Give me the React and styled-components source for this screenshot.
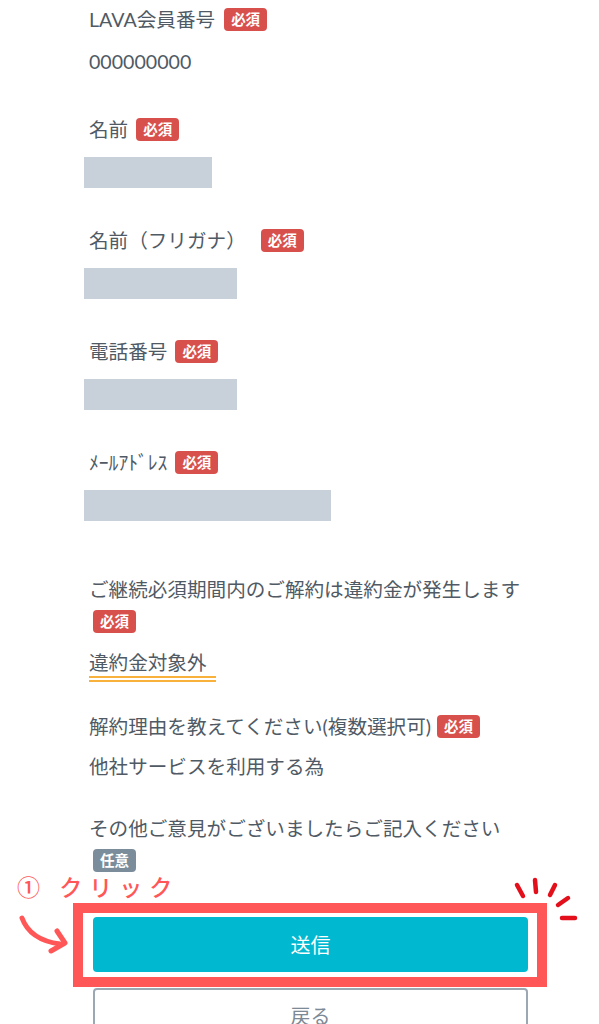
import React from 'react';
import styled, { createGlobalStyle } from 'styled-components';

const GlobalStyle = createGlobalStyle`
  body {
    margin: 0;
    background: #fff;
    font-family: Lato, "Noto Sans CJK JP", sans-serif;
  }
`;

const Page = styled.div`
  width: 599px;
  height: 1024px;
  overflow: hidden;
  box-sizing: border-box;
  padding-top: 5px;
  color: #4f5a65;
`;

const Form = styled.div`
  padding: 0 71px 0 89px;
  display: flex;
  flex-direction: column;
`;

const Field = styled.div`
  margin-top: ${p => p.$mt || 0}px;
`;

const Label = styled.div`
  font-size: 19.6px;
  line-height: ${p => p.$lh || 30}px;
`;

const Badge = styled.span`
  display: inline-block;
  margin-left: ${p => p.$ml || 4}px;
  padding: 2px 7px;
  font-size: 14.5px;
  line-height: 19px;
  font-weight: 700;
  color: #fff;
  background: ${p => (p.$optional ? '#7b8d9a' : '#d8504c')};
  border-radius: 4px;
  vertical-align: 2px;
`;

const Value = styled.div`
  margin-top: ${p => p.$mt || 12}px;
  font-size: 19.6px;
  line-height: 30px;
`;

const Masked = styled.div`
  margin: 12px 0 0 -5px;
  width: ${p => p.$w}px;
  height: 31px;
  background: #c8d0da;
`;

const Selected = styled.div`
  display: inline-block;
  margin-top: 12px;
  padding-right: 9px;
  font-size: 19.6px;
  line-height: 26px;
  border-bottom: 6px double #f8b23c;
`;

const Buttons = styled.div`
  margin: 40px 0 0 93px;
  width: 435px;
  display: flex;
  flex-direction: column;
  gap: 16px;
`;

const Highlight = styled.div`
  position: relative;
  &::before {
    content: '';
    position: absolute;
    top: -14px;
    left: -20px;
    right: -19px;
    bottom: -15px;
    border: 10px solid #ff5757;
    pointer-events: none;
  }
`;

const Button = styled.div`
  height: 55px;
  box-sizing: border-box;
  border-radius: 4px;
  display: flex;
  align-items: center;
  justify-content: center;
  font-size: 20px;
  background: ${p => (p.$primary ? '#00b9d1' : '#fff')};
  color: ${p => (p.$primary ? '#fff' : '#7d8994')};
  border: ${p => (p.$primary ? 'none' : '2px solid #9ba7b3')};
`;

const ClickNote = styled.div`
  position: absolute;
  top: -45px;
  left: -76px;
  font-family: "Noto Sans CJK JP", sans-serif;
  font-size: 23px;
  font-weight: 500;
  line-height: 28px;
  letter-spacing: 7px;
  color: #ff5757;
  white-space: nowrap;
`;

const Mark = styled.svg`
  position: absolute;
  overflow: visible;
`;

const Arrow = () => (
  <Mark width="50" height="40" style={{ left: -71, top: 1 }} viewBox="0 0 50 40">
    <g fill="none" stroke="#ff5757" strokeWidth="5" strokeLinecap="round" strokeLinejoin="round">
      <path d="M0 0 Q 8 22 38 26" />
      <path d="M35 13 L 43 25 L 29 33" />
    </g>
  </Mark>
);

const Sparkle = () => (
  <Mark width="60" height="40" style={{ left: 424, top: -37 }} viewBox="0 0 60 40">
    <g fill="none" stroke="#e3101c" strokeWidth="4.5" strokeLinecap="round">
      <path d="M0 5 L 6 16" />
      <path d="M18 0 L 19 12" />
      <path d="M38 5 L 33 15" />
      <path d="M51 18 L 41 25" />
      <path d="M45 38 L 58 38" />
    </g>
  </Mark>
);

export default function App() {
  return (
    <Page>
      <GlobalStyle />
      <Form>
        <Field>
          <Label>LAVA会員番号<Badge $ml={9}>必須</Badge></Label>
          <Value>000000000</Value>
        </Field>
        <Field $mt={38}>
          <Label>名前<Badge $ml={8}>必須</Badge></Label>
          <Masked $w={128} />
        </Field>
        <Field $mt={38}>
          <Label>名前（フリガナ）<Badge $ml={15}>必須</Badge></Label>
          <Masked $w={153} />
        </Field>
        <Field $mt={38}>
          <Label>電話番号<Badge $ml={8}>必須</Badge></Label>
          <Masked $w={153} />
        </Field>
        <Field $mt={38}>
          <Label>ﾒｰﾙｱﾄﾞﾚｽ<Badge $ml={8}>必須</Badge></Label>
          <Masked $w={247} />
        </Field>
        <Field $mt={53}>
          <Label $lh={32}>ご継続必須期間内のご解約は違約金が発生します<Badge>必須</Badge></Label>
          <Selected>違約金対象外</Selected>
        </Field>
        <Field $mt={30}>
          <Label>解約理由を教えてください(複数選択可)<Badge $ml={6}>必須</Badge></Label>
          <Value $mt={10}>他社サービスを利用する為</Value>
        </Field>
        <Field $mt={31}>
          <Label $lh={32}>その他ご意見がございましたらご記入ください<Badge $optional>任意</Badge></Label>
        </Field>
      </Form>
      <Buttons>
        <Highlight>
          <ClickNote>① クリック</ClickNote>
          <Arrow />
          <Sparkle />
          <Button $primary>送信</Button>
        </Highlight>
        <Button>戻る</Button>
      </Buttons>
    </Page>
  );
}
